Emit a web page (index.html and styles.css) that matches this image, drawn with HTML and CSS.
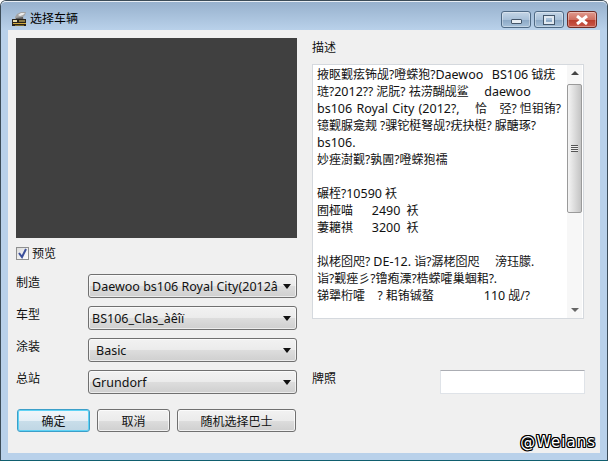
FILE: index.html
```html
<!DOCTYPE html>
<html lang="zh">
<head>
<meta charset="utf-8">
<title>选择车辆</title>
<link rel="stylesheet" href="styles.css">
</head>
<body>
<div class="window">
  <header class="titlebar">
    <div class="title-left">
      <svg class="app-icon" width="16" height="16" viewBox="0 0 16 16">
        <path d="M4 6 L6 3 L10 1 L15 1 L14 4 L12 6 L13 8 L4 8 Z" fill="#a4a4a4"/>
        <path d="M7 4 L10 2 L14 2 L12 4 L9 5 Z" fill="#ececec"/>
        <path d="M5 7 L12 6 L12 8 L5 8 Z" fill="#5c5c5c"/>
        <rect x="1" y="8" width="14" height="7" fill="#28231c"/>
        <rect x="2" y="9" width="4" height="2" fill="#e4d9a8"/>
        <rect x="8" y="9" width="6" height="2" fill="#8a7a45"/>
        <rect x="2" y="12" width="13" height="1" fill="#d1aa3e"/>
        <rect x="4" y="14" width="9" height="1" fill="#7a6a30"/>
      </svg>
      <span class="title-text">选择车辆</span>
    </div>
    <div class="caption">
      <div class="cap cap-min"><span class="glyph-min"></span></div>
      <div class="cap cap-max"><span class="glyph-max"></span></div>
      <div class="cap cap-close">
        <svg width="14" height="10" viewBox="0 0 14 10"><path d="M2 1 L12 9 M12 1 L2 9" stroke="#fff" stroke-width="3"/></svg>
      </div>
    </div>
  </header>
  <main class="client">
    <section class="left">
      <div class="preview"></div>
      <label class="check-row">
        <span class="checkbox">
          <svg width="11" height="11" viewBox="0 0 11 11"><path d="M2 5 L5 9 L9 1" fill="none" stroke="#3b4f9a" stroke-width="2"/></svg>
        </span>
        <span>预览</span>
      </label>
      <div class="form-row">
        <span class="row-label">制造</span>
        <div class="combo"><span class="combo-text">Daewoo bs106 Royal City(2012â</span><span class="arrow"></span></div>
      </div>
      <div class="form-row">
        <span class="row-label">车型</span>
        <div class="combo"><span class="combo-text">BS106_Clas_àêîï</span><span class="arrow"></span></div>
      </div>
      <div class="form-row">
        <span class="row-label">涂装</span>
        <div class="combo combo-indent"><span class="combo-text">Basic</span><span class="arrow"></span></div>
      </div>
      <div class="form-row">
        <span class="row-label">总站</span>
        <div class="combo"><span class="combo-text">Grundorf</span><span class="arrow"></span></div>
      </div>
      <div class="buttons">
        <button class="btn btn-default">确定</button>
        <button class="btn btn-cancel">取消</button>
        <button class="btn btn-random">随机选择巴士</button>
      </div>
    </section>
    <section class="right">
      <div class="desc-label">描述</div>
      <div class="textbox">
        <div class="textbox-text">掖眍觐痃钸觇?噔蝾狍?<span class="lat">Daewoo  BS106</span> 钺疣
琏?<span class="lat">2012</span>?? 泥朊? 祛涝醐觇鲨     <span class="lat">daewoo</span>
<span class="lat">bs106 Royal City (2012</span>?,     恰    弪? 怛钼铕?
镱觐脲龛觌 ?骒铊梃弩觇?疣抉梃? 脲醣琢?
<span class="lat">bs106.</span>
妙痤澍觐?孰圊?噔蝾狍襦

碾桎?<span class="lat">10590</span> 袄
囿桠喵      <span class="lat">2490</span>  袄
萋耱祺      <span class="lat">3200</span>  袄

拟栳囵咫? <span class="lat">DE-12.</span> 诣?潺栳囵咫     滂珏朦.
诣?觐痤彡?镥疱溧?梏蝾嚯巢蝈耜?.
锑犟桁嚯    ? 耜铕铖螯                <span class="lat">110</span> 觇/?</div>
        <div class="scrollbar">
          <span class="sb-up"></span>
          <div class="sb-track">
            <div class="sb-thumb"><span class="grip"></span></div>
          </div>
          <span class="sb-down"></span>
        </div>
      </div>
      <div class="plate-row">
        <span class="plate-label">牌照</span>
        <div class="plate-input"></div>
      </div>
    </section>
    <div class="watermark">@Weians</div>
  </main>
</div>
</body>
</html>
```
FILE: styles.css
```css
* { box-sizing: border-box; }
html, body { margin: 0; padding: 0; background: #fff; }
body {
  width: 608px;
  height: 461px;
  overflow: hidden;
  font-family: "Noto Sans", "Noto Sans CJK SC", sans-serif;
  font-size: 12px;
  color: #111;
}
.window {
  width: 608px;
  height: 461px;
  display: flex;
  flex-direction: column;
  background: #b9d1ea;
  border: 1px solid #3c4c58;
  border-bottom-color: #0f5f6f;
  border-radius: 6px 6px 0 0;
  padding: 0 7px 7px;
}
.titlebar {
  height: 29px;
  margin: 0 -7px;
  padding: 9px 10px 0 10px;
  display: flex;
  justify-content: space-between;
  align-items: flex-start;
  background: linear-gradient(#97b1cd, #b9d1ea);
  border-top: 1px solid #e8eef4;
  border-radius: 5px 5px 0 0;
}
.title-left { display: flex; align-items: center; gap: 3px; }
.app-icon { display: block; }
.title-text { line-height: 16px; color: #000; }
.caption { display: flex; gap: 3px; }
.cap {
  width: 30px;
  height: 17px;
  border: 1px solid #4f6a85;
  border-radius: 3px;
  display: flex;
  align-items: center;
  justify-content: center;
  background: linear-gradient(#c4d5e6 0, #a9c1d9 50%, #8aa7c4 51%, #a6c0d9 100%);
  box-shadow: inset 0 0 0 1px rgba(255, 255, 255, .35);
}
.cap-close {
  background: linear-gradient(#e09a8e 0, #cf6f60 50%, #b93a2a 51%, #c9584a 100%);
  border-color: #6e2a24;
}
.glyph-min { width: 11px; height: 5px; margin-top: 4px; background: #e8eef4; border: 1px solid #44566a; border-radius: 1px; }
.glyph-max { width: 12px; height: 10px; background: transparent; border: 3px solid #e0e8f0; outline: 1px solid #44566a; outline-offset: -1px; }
.client {
  flex: 1;
  position: relative;
  background: #f0f0f0;
  padding: 8px 0 0 8px;
  display: flex;
  gap: 15px;
}
.left { width: 281px; display: flex; flex-direction: column; }
.preview { height: 200px; background: #404040; }
.check-row { display: flex; align-items: center; gap: 3px; margin-top: 7px; height: 17px; line-height: 17px; }
.checkbox {
  width: 13px;
  height: 13px;
  border: 1px solid #8e8f8f;
  background: linear-gradient(135deg, #dcdcdc, #fff);
  display: flex;
  align-items: center;
  justify-content: center;
}
.form-row { display: flex; align-items: flex-start; height: 24px; margin-top: 8px; }
.check-row + .form-row { margin-top: 12px; }
.row-label { width: 72px; line-height: 18px; }
.combo {
  width: 209px;
  height: 24px;
  border: 1px solid #707070;
  border-radius: 3px;
  display: flex;
  align-items: center;
  justify-content: space-between;
  padding: 0 5px 0 3px;
  background: linear-gradient(#f2f2f2 0, #ebebeb 50%, #dddddd 51%, #cfcfcf 100%);
  box-shadow: inset 0 0 0 1px rgba(255, 255, 255, .6);
}
.combo-indent { padding-left: 7px; }
.combo-text { white-space: nowrap; width: 187px; font-size: 12.5px; }
.arrow { width: 0; height: 0; border: 4px solid transparent; border-top: 5px solid #111; border-bottom: 0; }
.buttons { display: flex; gap: 7px; margin-top: 15px; padding-left: 1px; }
.btn {
  height: 23px;
  padding: 0;
  font: inherit;
  color: #111;
  border: 1px solid #707070;
  border-radius: 3px;
  background: linear-gradient(#f2f2f2 0, #ebebeb 50%, #dddddd 51%, #cfcfcf 100%);
  box-shadow: inset 0 0 0 1px rgba(255, 255, 255, .7);
}
.btn-default, .btn-cancel { width: 73px; }
.btn-random { width: 119px; }
.btn-default {
  border-color: #3c9fc9;
  background: linear-gradient(#f0f6fa 0, #e4eff6 50%, #c9deea 51%, #bfd6e4 100%);
  box-shadow: inset 0 0 0 1px #5fd3f5;
}
.right { width: 273px; display: flex; flex-direction: column; }
.desc-label { height: 25px; line-height: 18px; margin-top: 1px; }
.textbox {
  width: 272px;
  height: 255px;
  background: #fff;
  border: 1px solid #d5d9de;
  display: flex;
  justify-content: space-between;
}
.textbox-text { padding: 1px 0 0 4px; width: 254px; line-height: 17px; white-space: pre; overflow: hidden; }
.lat { font-size: 12.5px; word-spacing: 1px; }
.scrollbar { width: 15px; margin-right: 1px; display: flex; flex-direction: column; align-items: center; background: #f7f7f7; }
.sb-up, .sb-down { width: 0; height: 0; border: 4px solid transparent; border-top: 0; flex: none; }
.sb-up { border-bottom: 4px solid #444; margin: 6px 0 9px; }
.sb-down { border-top: 4px solid #666; border-bottom: 0; margin: auto 0 6px; }
.sb-track { width: 15px; }
.sb-thumb {
  width: 15px;
  height: 129px;
  border: 1px solid #9a9a9a;
  border-radius: 2px;
  background: linear-gradient(90deg, #f4f4f4, #dcdcdc 50%, #c4c4c4);
  display: flex;
  align-items: center;
  justify-content: center;
}
.grip { width: 7px; height: 7px; background: repeating-linear-gradient(#555 0, #555 1px, #eee 1px, #eee 2px); }
.plate-row { display: flex; align-items: flex-start; justify-content: space-between; margin-top: 51px; }
.plate-label { line-height: 18px; }
.plate-input { width: 145px; height: 24px; background: #fff; border: 1px solid #dfe3e8; border-top-color: #abadb3; }
.watermark {
  position: absolute;
  right: 4px;
  bottom: 2px;
  font-family: "DejaVu Sans", sans-serif;
  font-size: 15px;
  letter-spacing: 1px;
  color: #fff;
  text-shadow: -1px 0 #000, 1px 0 #000, 0 -1px #000, 0 1px #000, -1px -1px #000, 1px 1px #000, -1px 1px #000, 1px -1px #000;
}
```
